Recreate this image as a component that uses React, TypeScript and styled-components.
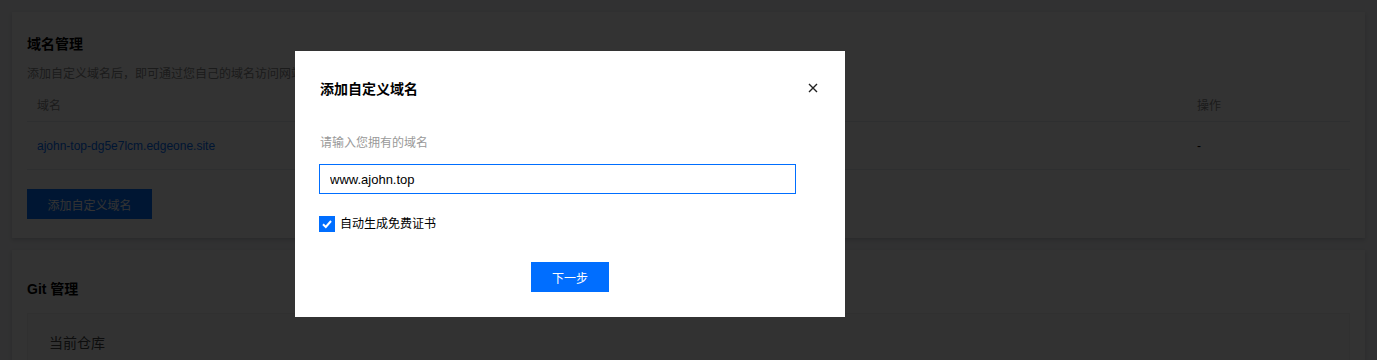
import styled, { createGlobalStyle } from 'styled-components';

const GlobalStyle = createGlobalStyle`
  html, body {
    margin: 0;
    padding: 0;
    background: #f3f4f7;
    font-family: "Liberation Sans", "Noto Sans CJK SC", sans-serif;
    font-size: 12px;
    color: #000;
    overflow: hidden;
  }
  * { box-sizing: border-box; }
`;

const Page = styled.div`
  display: flex;
  flex-direction: column;
  gap: 12px;
  padding: 12px 12px 0 12px;
  height: 360px;
  overflow: hidden;
`;

const Card = styled.section<{ $top?: number }>`
  flex-shrink: 0;
  background: #fff;
  padding: ${(p) => p.$top ?? 24}px 15px 19px 15px;
  box-shadow: 0 2px 4px rgba(54, 58, 80, 0.2);
`;

const CardTitle = styled.h3`
  margin: 0;
  font-size: 14px;
  font-weight: bold;
  line-height: 16px;
  color: #000;
`;

const Desc = styled.p`
  margin: 13px 0 5px 0;
  line-height: 18px;
  color: #888;
  white-space: nowrap;
`;

const Table = styled.div`
  display: flex;
  flex-direction: column;
`;

const Row = styled.div<{ $h: number }>`
  display: grid;
  grid-template-columns: 1fr 163px;
  height: ${(p) => p.$h}px;
  align-items: center;
  border-bottom: 1px solid #e7eaef;
`;

const Cell = styled.div<{ $head?: boolean }>`
  padding: 0 10px;
  color: ${(p) => (p.$head ? '#888' : '#000')};
`;

const Link = styled.a`
  color: #006eff;
  text-decoration: none;
`;

const PrimaryButton = styled.button<{ $w?: number }>`
  height: 30px;
  width: ${(p) => p.$w ?? 125}px;
  border: none;
  background: #006eff;
  color: #fff;
  font-family: inherit;
  font-size: 12px;
  cursor: pointer;
`;

const AddButton = styled(PrimaryButton)`
  margin-top: 19px;
`;

const RepoBox = styled.div`
  margin-top: 16px;
  padding: 20px 21px;
  background: #fafafa;
  border: 1px solid #f0f0f0;
  font-size: 14px;
  color: #444;
  line-height: 18px;
`;

const Overlay = styled.div`
  position: fixed;
  inset: 0;
  background: rgba(0, 0, 0, 0.8);
`;

const Modal = styled.div`
  position: absolute;
  top: 51px;
  left: 295px;
  width: 550px;
  background: #fff;
  padding: 27px 24px 25px 24px;
  display: flex;
  flex-direction: column;
`;

const ModalHeader = styled.div`
  display: flex;
  justify-content: space-between;
  align-items: center;
  height: 20px;
`;

const ModalTitle = styled.h4`
  margin: 0 0 0 1px;
  font-size: 14px;
  font-weight: bold;
  color: #000;
`;

const CloseBtn = styled.button`
  width: 16px;
  height: 16px;
  padding: 0;
  border: none;
  background: none;
  display: flex;
  align-items: center;
  justify-content: center;
  cursor: pointer;
`;

const FieldLabel = styled.label`
  margin: 36px 0 12px 1px;
  line-height: 18px;
  color: #999;
`;

const Input = styled.input`
  width: 477px;
  height: 30px;
  border: 1px solid #006eff;
  padding: 0 10px;
  font-family: inherit;
  font-size: 13px;
  color: #000;
  outline: none;
`;

const CheckRow = styled.label`
  margin-top: 22px;
  display: flex;
  align-items: center;
  gap: 5px;
  line-height: 16px;
  color: #000;
`;

const CheckBox = styled.span`
  width: 16px;
  height: 16px;
  background: #006eff;
  display: flex;
  align-items: center;
  justify-content: center;
`;

const Footer = styled.div`
  margin-top: 30px;
  display: flex;
  justify-content: center;
`;

export default function App() {
  return (
    <>
      <GlobalStyle />
      <Page>
        <Card>
          <CardTitle>域名管理</CardTitle>
          <Desc>添加自定义域名后，即可通过您自己的域名访问网站，请确保域名已完成备案并正确配置 CNAME 解析。</Desc>
          <Table>
            <Row $h={34}>
              <Cell $head>域名</Cell>
              <Cell $head>操作</Cell>
            </Row>
            <Row $h={48}>
              <Cell>
                <Link href="#">ajohn-top-dg5e7lcm.edgeone.site</Link>
              </Cell>
              <Cell>-</Cell>
            </Row>
          </Table>
          <AddButton>添加自定义域名</AddButton>
        </Card>
        <Card $top={31}>
          <CardTitle>Git 管理</CardTitle>
          <RepoBox>当前仓库</RepoBox>
        </Card>
      </Page>
      <Overlay>
        <Modal>
          <ModalHeader>
            <ModalTitle>添加自定义域名</ModalTitle>
            <CloseBtn aria-label="关闭">
              <svg width="10" height="10" viewBox="0 0 10 10">
                <path d="M1 1L9 9M9 1L1 9" stroke="#222" strokeWidth="1.4" />
              </svg>
            </CloseBtn>
          </ModalHeader>
          <FieldLabel>请输入您拥有的域名</FieldLabel>
          <Input defaultValue="www.ajohn.top" />
          <CheckRow>
            <CheckBox>
              <svg width="12" height="12" viewBox="0 0 12 12">
                <path d="M2 6.2L4.8 9L10 3" stroke="#fff" strokeWidth="2" fill="none" />
              </svg>
            </CheckBox>
            自动生成免费证书
          </CheckRow>
          <Footer>
            <PrimaryButton $w={78}>下一步</PrimaryButton>
          </Footer>
        </Modal>
      </Overlay>
    </>
  );
}
